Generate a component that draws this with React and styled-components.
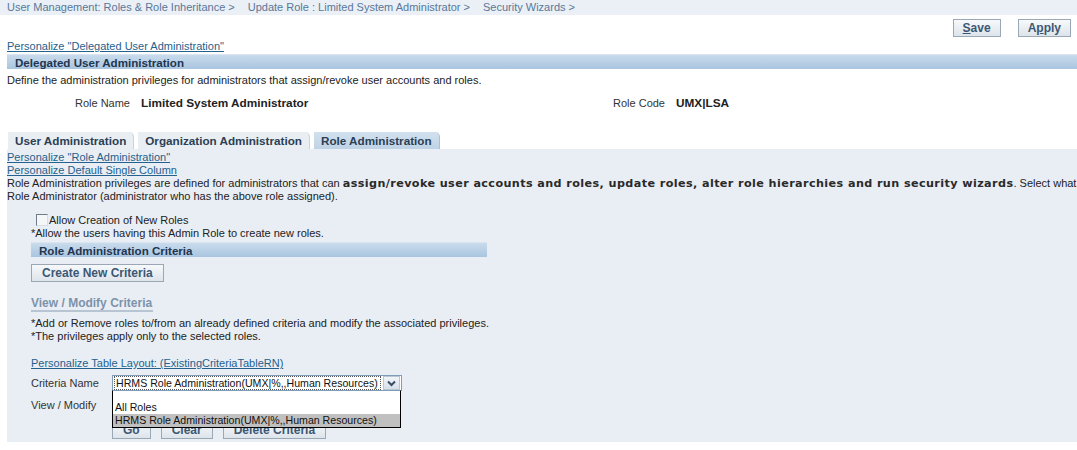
import React from "react";
import styled, { createGlobalStyle } from "styled-components";

const GlobalStyle = createGlobalStyle`
  html, body {
    margin: 0;
    padding: 0;
    background: #ffffff;
  }
  body {
    font-family: "Liberation Sans", Arial, sans-serif;
    font-size: 11px;
    color: #222222;
    overflow: hidden;
  }
`;

const Page = styled.div`
  width: 1077px;
  height: 450px;
  overflow: hidden;
  position: relative;
`;

const Breadcrumbs = styled.div`
  display: flex;
  gap: 13px;
  height: 15px;
  line-height: 14px;
  padding-left: 7px;
  background: #eaf0f5;
  color: #59779a;
  font-size: 11px;
  white-space: nowrap;
`;

const ButtonBar = styled.div`
  display: flex;
  justify-content: flex-end;
  gap: 17px;
  padding: 4px 6px 0 0;
  height: 19px;
`;

const Button = styled.div`
  display: inline-flex;
  align-items: center;
  justify-content: center;
  height: ${({ $h }) => $h || 18}px;
  padding: 0 ${({ $px }) => $px || 9}px;
  box-sizing: border-box;
  border: 1px solid #9aa7b4;
  background: linear-gradient(#f7f9fb, #dde4ea);
  color: #3c5774;
  font-weight: bold;
  font-size: 12px;
  white-space: nowrap;
  u {
    text-decoration: underline;
  }
`;

const Link = styled.div`
  color: #24618c;
  text-decoration: underline;
  line-height: 13px;
  padding-left: ${({ $indent }) => $indent || 0}px;
  margin-top: ${({ $mt }) => $mt || 0}px;
  white-space: nowrap;
`;

const Section = styled.div`
  padding-left: 7px;
`;

const HeaderBar = styled.div`
  height: 15px;
  line-height: 15px;
  box-sizing: border-box;
  margin-top: ${({ $mt }) => $mt || 0}px;
  padding-left: ${({ $pl }) => $pl || 8}px;
  width: ${({ $w }) => ($w ? `${$w}px` : "auto")};
  border-top: 1px solid #d9e6f1;
  background: linear-gradient(#c9dbec, #a9c5df);
  color: #1f3550;
  font-weight: bold;
  font-size: 11.6px;
  white-space: nowrap;
`;

const Text = styled.div`
  line-height: 13px;
  margin-top: ${({ $mt }) => $mt || 0}px;
  padding-left: ${({ $indent }) => $indent || 0}px;
  white-space: nowrap;
  overflow: hidden;
  b {
    font-family: "DejaVu Sans", Verdana, sans-serif;
    font-weight: bold;
    font-size: 11.2px;
    letter-spacing: 0.4px;
    color: #2a2a2a;
  }
`;

const InfoRow = styled.div`
  display: flex;
  margin-top: 10px;
  height: 13px;
  line-height: 13px;
`;

const InfoPair = styled.div`
  display: flex;
  align-items: center;
  width: ${({ $w }) => $w}px;
`;

const InfoLabel = styled.span`
  width: ${({ $w }) => $w}px;
  text-align: right;
  padding-right: 11px;
  box-sizing: border-box;
  color: #333333;
`;

const InfoValue = styled.span`
  font-weight: bold;
  font-size: 11.8px;
  color: #222222;
`;

const Tabs = styled.div`
  display: flex;
  gap: 4px;
  margin-top: 22px;
  padding-left: 8px;
`;

const Tab = styled.div`
  height: 17px;
  line-height: 18px;
  padding: 0 ${({ $px }) => $px || 7}px;
  box-sizing: border-box;
  border-top-right-radius: 5px;
  background: ${({ $active }) =>
    $active ? "linear-gradient(#d2e1ee, #bfd3e6)" : "#e9eef2"};
  border-right: 1px solid ${({ $active }) => ($active ? "#a8c0d6" : "#c9d2da")};
  color: #2b3f55;
  font-weight: bold;
  font-size: 11.7px;
  white-space: nowrap;
`;

const Panel = styled.div`
  position: relative;
  margin-left: 7px;
  height: 293px;
  background: #e9eef5;
  padding-top: 1px;
  box-sizing: border-box;
`;

const Inner = styled.div`
  padding-left: 24px;
`;

const CheckRow = styled.div`
  display: flex;
  align-items: center;
  margin-top: 10px;
  padding-left: 5px;
  height: 13px;
`;

const Checkbox = styled.span`
  width: 12px;
  height: 12px;
  box-sizing: border-box;
  border: 1px solid #6f7b86;
  border-right-color: #d6dde4;
  border-bottom-color: #d6dde4;
  background: #f4f6f8;
  margin-right: 1px;
`;

const Spacer = styled.div`
  height: ${({ $h }) => $h}px;
`;

const SubHeading = styled.div`
  display: inline-block;
  margin-top: ${({ $mt }) => $mt || 0}px;
  color: #7c93aa;
  font-weight: bold;
  font-size: 12px;
  line-height: 14px;
  border-bottom: 2px solid #b7c5d3;
  padding-right: 1px;
`;

const FormRow = styled.div`
  display: flex;
  align-items: center;
  height: ${({ $h }) => $h || 16}px;
  margin-top: ${({ $mt }) => $mt || 0}px;
`;

const FormLabel = styled.span`
  width: 81px;
  color: #333333;
`;

const Select = styled.div`
  display: flex;
  align-items: center;
  width: 290px;
  height: 16px;
  box-sizing: border-box;
  border: 1px solid #7f9db9;
  background: #ffffff;
  padding: 1px;
`;

const SelectText = styled.span`
  flex: 1;
  height: 12px;
  line-height: 12px;
  border: 1px dotted #555555;
  padding-left: 1px;
  color: #111111;
  font-size: 10.6px;
  white-space: nowrap;
  overflow: hidden;
`;

const SelectArrow = styled.span`
  display: flex;
  align-items: center;
  justify-content: center;
  width: 15px;
  height: 12px;
  margin-left: 2px;
  border: 1px solid #b9c6d4;
  background: linear-gradient(#f2f5f9, #d7e0ea);
`;

const ActionRow = styled.div`
  display: flex;
  gap: 10px;
  padding-left: 81px;
  margin-top: 8px;
`;

const DropList = styled.div`
  position: absolute;
  left: 105px;
  top: 241px;
  width: 289px;
  height: 38px;
  box-sizing: border-box;
  border: 1px solid #000000;
  border-top-color: #7f9db9;
  background: #ffffff;
  display: flex;
  flex-direction: column;
  justify-content: flex-end;
`;

const Option = styled.div`
  height: 13px;
  line-height: 13px;
  padding-left: 2px;
  color: #111111;
  font-size: 10.6px;
  background: ${({ $selected }) => ($selected ? "#c0c0c0" : "transparent")};
  white-space: nowrap;
`;

function Chevron() {
  return (
    <svg width="9" height="7" viewBox="0 0 9 7">
      <path d="M1 1.5 L4.5 5 L8 1.5" fill="none" stroke="#3a4d63" strokeWidth="2" />
    </svg>
  );
}

const criteria = "HRMS Role Administration(UMX|%,,Human Resources)";

export default function App() {
  return (
    <Page>
      <GlobalStyle />
      <Breadcrumbs>
        <span>User Management: Roles &amp; Role Inheritance &gt;</span>
        <span>Update Role : Limited System Administrator &gt;</span>
        <span>Security Wizards &gt;</span>
      </Breadcrumbs>
      <ButtonBar>
        <Button $px={9}>
          <u>S</u>ave
        </Button>
        <Button $px={9}>
          A<u>p</u>ply
        </Button>
      </ButtonBar>
      <Section>
        <Link $mt={2}>Personalize "Delegated User Administration"</Link>
        <HeaderBar $mt={1}>Delegated User Administration</HeaderBar>
        <Text $mt={5}>
          Define the administration privileges for administrators that assign/revoke user accounts and roles.
        </Text>
        <InfoRow>
          <InfoPair $w={600}>
            <InfoLabel $w={134}>Role Name</InfoLabel>
            <InfoValue>Limited System Administrator</InfoValue>
          </InfoPair>
          <InfoPair $w={300}>
            <InfoLabel $w={69}>Role Code</InfoLabel>
            <InfoValue>UMX|LSA</InfoValue>
          </InfoPair>
        </InfoRow>
      </Section>
      <Tabs>
        <Tab>User Administration</Tab>
        <Tab>Organization Administration</Tab>
        <Tab $active>Role Administration</Tab>
      </Tabs>
      <Panel>
        <Link $mt={1}>Personalize "Role Administration"</Link>
        <Link>Personalize Default Single Column</Link>
        <Text>
          Role Administration privileges are defined for administrators that can{" "}
          <b>assign/revoke user accounts and roles, update roles, alter role hierarchies and run security wizards</b>.
          Select what roles can be administered by this
        </Text>
        <Text>Role Administrator (administrator who has the above role assigned).</Text>
        <Inner>
          <CheckRow>
            <Checkbox />
            <span>Allow Creation of New Roles</span>
          </CheckRow>
          <Text $mt={1}>*Allow the users having this Admin Role to create new roles.</Text>
          <Spacer $h={2} />
          <HeaderBar $w={456} $pl={8}>Role Administration Criteria</HeaderBar>
          <Spacer $h={7} />
          <Button $h={18} $px={10}>Create New Criteria</Button>
          <div>
            <SubHeading $mt={14}>View / Modify Criteria</SubHeading>
          </div>
          <Text $mt={5}>*Add or Remove roles to/from an already defined criteria and modify the associated privileges.</Text>
          <Text>*The privileges apply only to the selected roles.</Text>
          <Link $mt={14}>Personalize Table Layout: (ExistingCriteriaTableRN)</Link>
          <FormRow $mt={5}>
            <FormLabel>Criteria Name</FormLabel>
            <Select>
              <SelectText>{criteria}</SelectText>
              <SelectArrow>
                <Chevron />
              </SelectArrow>
            </Select>
          </FormRow>
          <FormRow $mt={6}>
            <FormLabel>View / Modify</FormLabel>
          </FormRow>
          <ActionRow>
            <Button $h={18} $px={10}>Go</Button>
            <Button $h={18} $px={10}>Clear</Button>
            <Button $h={18} $px={10}>Delete Criteria</Button>
          </ActionRow>
        </Inner>
        <DropList>
          <Option>All Roles</Option>
          <Option $selected>{criteria}</Option>
        </DropList>
      </Panel>
    </Page>
  );
}
